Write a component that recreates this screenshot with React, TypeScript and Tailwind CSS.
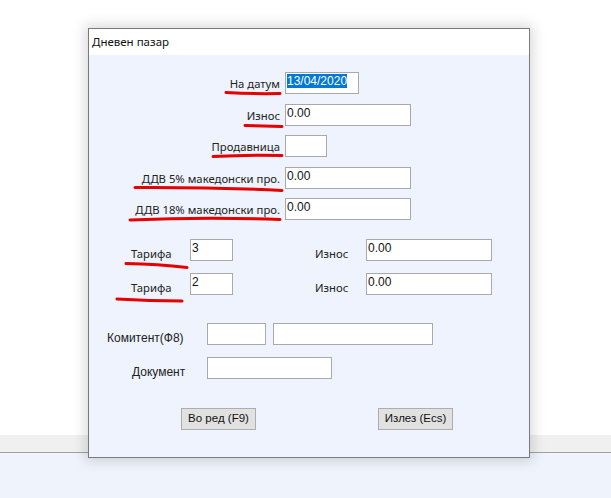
import React from "react";

const labelFont = { fontFamily: '"Noto Sans", "Liberation Sans", sans-serif' };

function Field({ w, value, selected }: { w: string; value?: string; selected?: boolean }) {
  return (
    <div
      className={`${w} h-[22px] bg-white border border-[#a9a9a9] pl-[1px] pt-[1px] text-[12px] leading-[14px] text-[#111] font-['Liberation_Sans',sans-serif]`}
    >
      {selected ? <span className="bg-[#0078d7] text-white">{value}</span> : value}
    </div>
  );
}

function TopRow({ label, w, value, selected, mt }: { label: string; w: string; value?: string; selected?: boolean; mt: string }) {
  return (
    <div className={`flex items-start h-[22px] ${mt}`}>
      <div className="w-[191px] text-right text-[11.3px] leading-[14px] text-[#222] pt-[5px]" style={labelFont}>
        {label}
      </div>
      <div className="ml-[5px]">
        <Field w={w} value={value} selected={selected} />
      </div>
    </div>
  );
}

function TarifaRow({ code, mt }: { code: string; mt: string }) {
  return (
    <div className={`flex items-start h-[22px] pl-[42px] ${mt}`}>
      <div className="w-[59px] text-[11.3px] leading-[14px] text-[#222] pt-[8px]" style={labelFont}>
        Тарифа
      </div>
      <Field w="w-[43px]" value={code} />
      <div className="w-[82px]" />
      <div className="w-[51px] text-[11.3px] leading-[14px] text-[#222] pt-[8px]" style={labelFont}>
        Износ
      </div>
      <Field w="w-[126px]" value="0.00" />
    </div>
  );
}

function WinButton({ children }: { children: React.ReactNode }) {
  return (
    <div className="w-[75px] h-[22px] bg-[#e1e1e1] border border-[#adadad] flex items-center justify-center text-[11.5px] text-[#111] font-['Liberation_Sans',sans-serif]">
      {children}
    </div>
  );
}

export default function App() {
  return (
    <div className="relative w-[611px] h-[498px] overflow-hidden flex flex-col">
      <div className="h-[435px] bg-white" />
      <div className="h-[17px] bg-[#f0f0f0]" />
      <div className="h-[1px] bg-[#a0a0a0]" />
      <div className="flex-1 bg-[#eef3fc]" />

      <div className="absolute left-[88px] top-[28px] w-[442px] h-[430px] border border-[#7a7a7a] flex flex-col shadow-[0_0_12px_3px_rgba(0,0,0,0.15)]">
        <div className="h-[26px] bg-white flex items-center pl-[3px] text-[11.5px] text-[#111]" style={labelFont}>
          Дневен пазар
        </div>
        <div className="flex-1 bg-[#eef3fd] flex flex-col">
          <TopRow label="На датум" w="w-[74px]" value="13/04/2020" selected mt="mt-[17px]" />
          <TopRow label="Износ" w="w-[126px]" value="0.00" mt="mt-[10px]" />
          <TopRow label="Продавница" w="w-[42px]" mt="mt-[9px]" />
          <TopRow label="ДДВ 5% македонски про." w="w-[126px]" value="0.00" mt="mt-[10px]" />
          <TopRow label="ДДВ 18% македонски про." w="w-[126px]" value="0.00" mt="mt-[9px]" />

          <TarifaRow code="3" mt="mt-[19px]" />
          <TarifaRow code="2" mt="mt-[12px]" />

          <div className="flex items-start h-[22px] pl-[18px] mt-[28px] font-['Liberation_Sans',sans-serif] text-[12px] leading-[14px] text-[#222]">
            <div className="w-[100px] pt-[8px]">Комитент(Ф8)</div>
            <Field w="w-[59px]" />
            <div className="ml-[7px]">
              <Field w="w-[160px]" />
            </div>
          </div>
          <div className="flex items-start h-[22px] pl-[18px] mt-[12px] font-['Liberation_Sans',sans-serif] text-[12px] leading-[14px] text-[#222]">
            <div className="w-[100px] pl-[25px] pt-[8px]">Документ</div>
            <Field w="w-[125px]" />
          </div>

          <div className="flex pl-[92px] mt-[29px] gap-[122px]">
            <WinButton>Во ред (F9)</WinButton>
            <WinButton>Излез (Ecs)</WinButton>
          </div>
        </div>
      </div>

      <svg className="absolute inset-0 pointer-events-none" width="611" height="498" viewBox="0 0 611 498">
        <g fill="none" stroke="#e60000" strokeWidth="3" strokeLinecap="round">
          <path d="M226 92.5 Q252 94 280 93.5" />
          <path d="M245 125.5 Q262 126 282 126.5" />
          <path d="M213 156.5 Q250 154.5 282 155.5" />
          <path d="M135 187.5 Q210 187 282 190.5" />
          <path d="M130 220 Q205 217 280 219.5" />
          <path d="M126 263.5 Q158 264 187 267.5" />
          <path d="M117 299 Q150 301 182 301" />
        </g>
      </svg>
    </div>
  );
}
